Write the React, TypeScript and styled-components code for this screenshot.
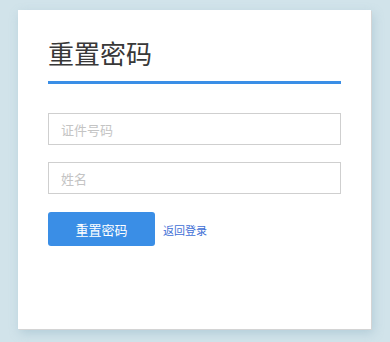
import React from "react";
import styled, { createGlobalStyle } from "styled-components";

const Global = createGlobalStyle`
  html, body { margin: 0; padding: 0; }
  body {
    background: #d1e3ea;
    font-family: "Microsoft YaHei", "Noto Sans CJK SC", sans-serif;
  }
`;

const Page = styled.div`
  width: 390px;
  height: 342px;
  padding: 10px 0 0 18px;
  box-sizing: border-box;
`;

const Card = styled.div`
  width: 353px;
  height: 319px;
  box-sizing: border-box;
  background: #fff;
  padding: 25px 30px 0 30px;
  box-shadow: 1px 1px 0 #d4d4d4, 2px 4px 10px rgba(120, 160, 180, 0.35);
  display: flex;
  flex-direction: column;
`;

const Title = styled.h1`
  margin: 0;
  font-size: 26px;
  font-weight: 400;
  line-height: 36px;
  color: #383838;
  padding-bottom: 10px;
  border-bottom: 3px solid #3a8ee6;
`;

const Field = styled.input`
  height: 32px;
  box-sizing: border-box;
  border: 1px solid #cfcfcf;
  padding: 0 12px;
  font-size: 13px;
  font-family: inherit;
  outline: none;
  margin-top: ${(p: { $gap: number }) => p.$gap}px;
  &::placeholder { color: #c4c4c4; }
`;

const Actions = styled.div`
  margin-top: 18px;
  display: flex;
  align-items: center;
  gap: 8px;
`;

const Button = styled.button`
  width: 107px;
  height: 34px;
  border: none;
  border-radius: 3px;
  background: #3a8ee6;
  color: #fff;
  font-size: 13px;
  font-family: inherit;
  padding: 0;
`;

const Link = styled.a`
  font-size: 11px;
  color: #3f6fd6;
  text-decoration: none;
  margin-top: 1px;
`;

export default function App() {
  return (
    <Page>
      <Global />
      <Card>
        <Title>重置密码</Title>
        <Field $gap={29} placeholder="证件号码" />
        <Field $gap={17} placeholder="姓名" />
        <Actions>
          <Button>重置密码</Button>
          <Link href="#">返回登录</Link>
        </Actions>
      </Card>
    </Page>
  );
}
